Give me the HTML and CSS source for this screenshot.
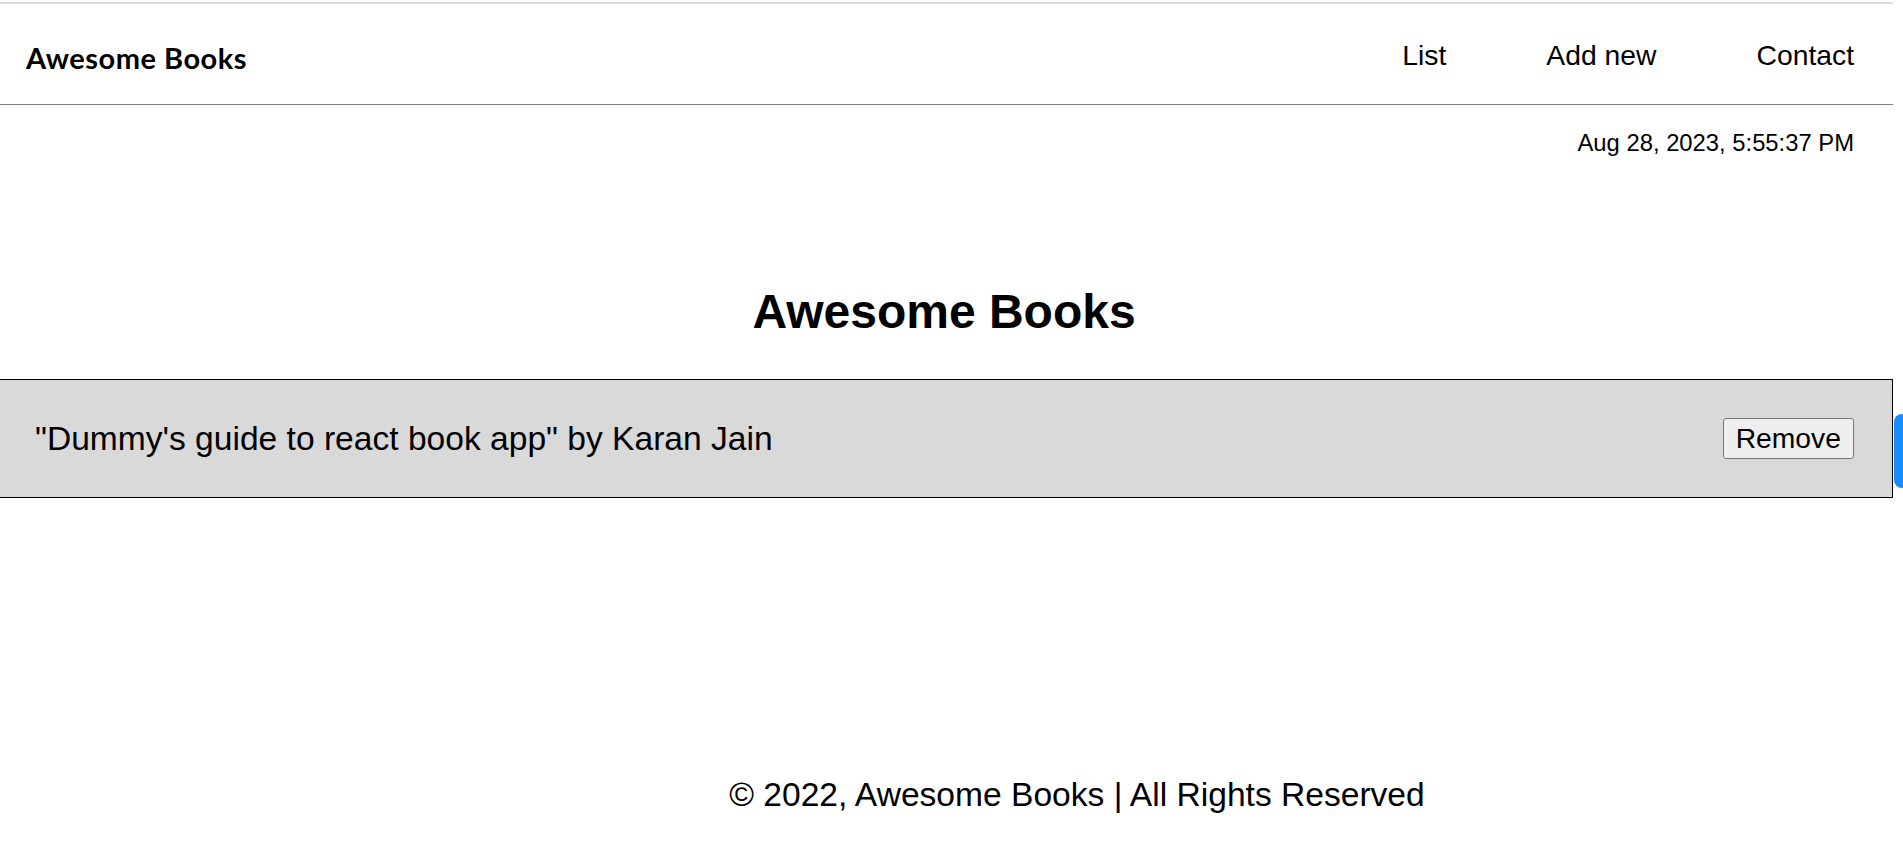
FILE: index.html
```html
<!DOCTYPE html>
<html lang="en">
<head>
<meta charset="utf-8">
<title>Awesome Books</title>
<link rel="stylesheet" href="styles.css">
</head>
<body>
<div class="page">
  <header class="header">
    <div class="logo">Awesome Books</div>
    <nav class="nav">
      <a class="nav-link" href="#">List</a>
      <a class="nav-link" href="#">Add new</a>
      <a class="nav-link" href="#">Contact</a>
    </nav>
  </header>
  <main class="main">
    <div class="date">Aug 28, 2023, 5:55:37 PM</div>
    <h1 class="title">Awesome Books</h1>
    <ul class="book-list">
      <li class="book">
        <p class="book-text">"Dummy's guide to react book app" by Karan Jain</p>
        <button class="remove-btn" type="button">Remove</button>
      </li>
    </ul>
  </main>
  <footer class="footer">© 2022, Awesome Books | All Rights Reserved</footer>
</div>
<div class="side-tab"></div>
</body>
</html>
```

FILE: styles.css
```css
* { box-sizing: border-box; }

html, body {
  margin: 0;
  padding: 0;
  background: #fff;
}

body {
  font-family: "Liberation Sans", Arial, sans-serif;
  color: #000;
}

.page {
  margin-right: 10px;
  min-height: 843px;
  display: flex;
  flex-direction: column;
  border-top: 2px solid #fff;
}

.header {
  display: flex;
  align-items: flex-start;
  justify-content: space-between;
  border-top: 2px solid #dcdcdc;
  border-bottom: 1px solid #808080;
  padding: 35px 39px 30px 26px;
}

.logo {
  margin-top: 3px;
  font-family: "Lato", sans-serif;
  font-weight: 700;
  font-size: 29px;
  letter-spacing: 0.5px;
  line-height: 32px;
}

.nav {
  display: flex;
  gap: 100px;
}

.nav-link {
  font-size: 28.3px;
  color: #000;
  text-decoration: none;
  line-height: 32px;
}

.main {
  flex: 1;
  display: flex;
  flex-direction: column;
}

.date {
  align-self: flex-end;
  margin: 24px 39px 0 0;
  font-size: 23.8px;
}

.title {
  margin: 127px 0 40px;
  padding-right: 5px;
  text-align: center;
  font-size: 48px;
  font-weight: 700;
  line-height: normal;
}

.book-list {
  list-style: none;
  margin: 0;
  padding: 0;
}

.book {
  display: flex;
  align-items: center;
  justify-content: space-between;
  background: #d9d9d9;
  border: 1px solid #000;
  border-left: none;
  padding: 38px 38px 38px 35px;
}

.book-text {
  margin: 0;
  font-size: 33.6px;
}

.remove-btn {
  font-family: "Liberation Sans", Arial, sans-serif;
  font-size: 28.3px;
  height: 41px;
  padding: 0 12px;
  background: #efefef;
  border: 1px solid #767676;
  border-radius: 3px;
  color: #000;
}

.footer {
  text-align: center;
  padding: 0 0 29px 261px;
  font-size: 33.6px;
  line-height: normal;
}

.side-tab {
  position: fixed;
  right: 0;
  top: 414px;
  width: 9px;
  height: 74px;
  background: #1a8cff;
  border-radius: 8px 0 0 8px;
}
```
